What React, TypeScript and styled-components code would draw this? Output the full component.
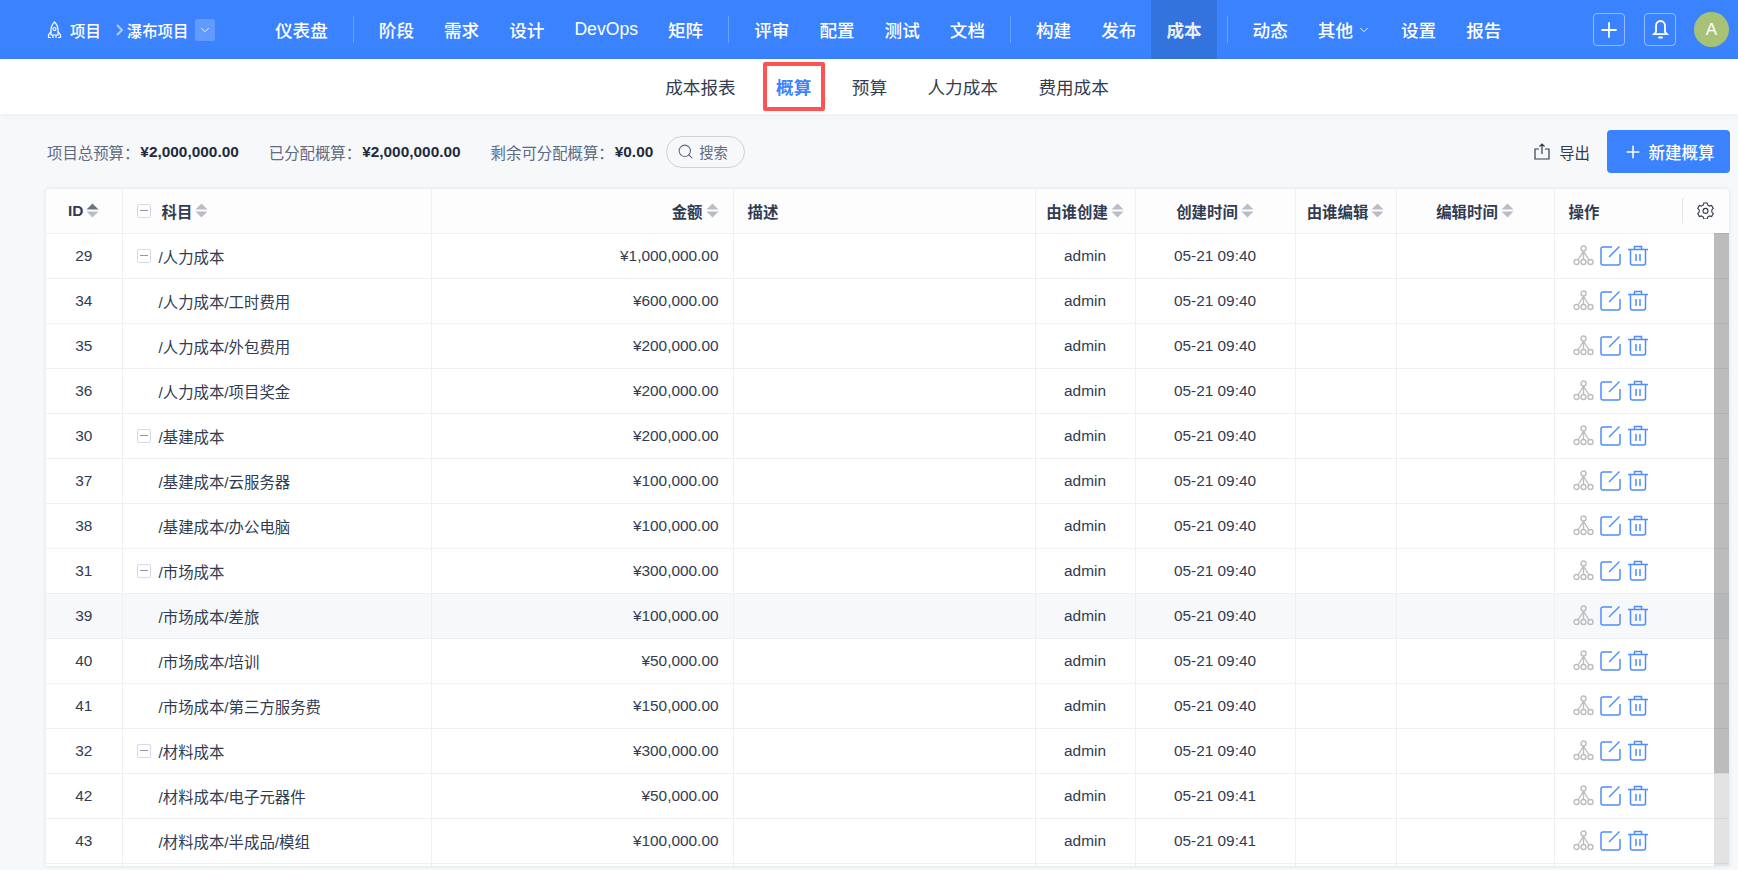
import React from "react";
import styled, { createGlobalStyle } from "styled-components";
import { ChevronDown, Plus, Search } from "lucide-react";

const Global = createGlobalStyle`
  html, body { margin: 0; padding: 0; height: 100%; overflow: hidden; background: #f7f8fa; }
  body { font-family: "Liberation Sans", "Noto Sans CJK SC", sans-serif; color: #313c52; }
  * { box-sizing: border-box; }
`;

const Page = styled.div`
  height: 870px;
  display: flex;
  flex-direction: column;
  overflow: hidden;
`;

const Header = styled.header`
  height: 59px;
  flex: none;
  background: #3b82ff;
  color: #fff;
  display: flex;
  align-items: center;
  padding-left: 47px;
  padding-right: 9px;
`;

const Crumbs = styled.div`
  width: 213px;
  display: flex;
  align-items: center;
  font-size: 15.4px;
  font-weight: 500;
`;

const CrumbText = styled.span`
  margin-left: 8px;
  white-space: nowrap;
`;

const CrumbSep = styled.span`
  display: flex;
  margin-left: 12px;
  margin-right: -8px;
  opacity: 0.6;
`;

const CrumbDrop = styled.span`
  width: 20px;
  height: 22px;
  margin-left: 7px;
  border-radius: 2px;
  background: rgba(255, 255, 255, 0.2);
  display: flex;
  align-items: center;
  justify-content: center;
`;

const Nav = styled.nav`
  display: flex;
  align-items: center;
  height: 59px;
  flex: 1;
`;

const NavItem = styled.a<{ $active?: boolean }>`
  height: 59px;
  padding: 0 15px;
  display: flex;
  align-items: center;
  gap: 4px;
  font-size: 17.6px;
  white-space: nowrap;
  font-weight: ${(p) => (p.$active ? 700 : 500)};
  color: ${(p) => (p.$active ? "#e9edf5" : "#fff")};
  background: ${(p) => (p.$active ? "#3273dd" : "transparent")};
`;

const NavSep = styled.span`
  width: 1px;
  height: 27px;
  margin: 0 10px;
  background: rgba(255, 255, 255, 0.25);
`;

const HeadActions = styled.div`
  display: flex;
  align-items: center;
`;

const IconBox = styled.span`
  width: 32px;
  height: 33px;
  margin-right: 19px;
  border: 1px solid rgba(255, 255, 255, 0.45);
  border-radius: 4px;
  display: flex;
  align-items: center;
  justify-content: center;
`;

const Avatar = styled.span`
  width: 35px;
  height: 35px;
  margin-left: -1px;
  border-radius: 50%;
  background: #a7c276;
  display: flex;
  align-items: center;
  justify-content: center;
  font-size: 17px;
`;

const SubNav = styled.div`
  height: 55px;
  flex: none;
  background: #fff;
  padding-left: 36px;
  display: flex;
  align-items: center;
  justify-content: center;
  gap: 40.5px;
  box-shadow: 0 1px 6px rgba(40, 60, 90, 0.06);
`;

const SubItem = styled.a<{ $active?: boolean }>`
  position: relative;
  font-size: 17.6px;
  white-space: nowrap;
  font-weight: ${(p) => (p.$active ? 700 : 400)};
  color: ${(p) => (p.$active ? "#3b82ff" : "#313c52")};
`;

const Highlight = styled.span`
  position: absolute;
  left: -13px;
  right: -14px;
  top: -12px;
  bottom: -12px;
  border: 4px solid #ff5252;
  border-radius: 2px;
`;

const Toolbar = styled.div`
  height: 75px;
  flex: none;
  padding: 0 8px 0 47px;
  display: flex;
  align-items: center;
  font-size: 15.4px;
`;

const Stat = styled.span`
  display: flex;
  align-items: center;
  margin-right: 30px;
  white-space: nowrap;
  color: #5e6b82;
`;

const StatValue = styled.b`
  margin-left: 1px;
  color: #1f2a3d;
  font-weight: 700;
`;

const SearchPill = styled.span`
  width: 79px;
  height: 32px;
  margin-left: -17px;
  border: 1px solid #ccd2dc;
  border-radius: 16px;
  display: flex;
  align-items: center;
  gap: 5px;
  padding-left: 10px;
  color: #5e6b82;
  font-size: 14.3px;
`;

const Spacer = styled.div`
  flex: 1;
`;

const ExportBtn = styled.span`
  display: flex;
  align-items: center;
  gap: 9px;
  margin-right: 17px;
  color: #313c52;
  font-size: 15.4px;
`;

const PrimaryBtn = styled.span`
  width: 123px;
  height: 43px;
  border-radius: 4px;
  background: #3b82ff;
  color: #fff;
  font-size: 16.5px;
  font-weight: 500;
  display: flex;
  align-items: center;
  justify-content: center;
  gap: 6px;
`;

const TableWrap = styled.div`
  flex: 1;
  min-height: 0;
  position: relative;
  margin: 0 9px 4px 46px;
  background: #fff;
  border-radius: 4px 4px 0 0;
  box-shadow: 0 0 4px rgba(40, 60, 90, 0.12);
  overflow: hidden;
`;

const Table = styled.table`
  width: 100%;
  border-collapse: collapse;
  table-layout: fixed;
  font-size: 15.4px;
`;

const Th = styled.th<{ $align?: string }>`
  height: 44px;
  padding: 0 14px;
  text-align: ${(p) => p.$align || "center"};
  font-weight: 700;
  color: #313c52;
  background: #fdfdfe;
  white-space: nowrap;
  border-right: 1px solid #eff0f3;
  border-bottom: 1px solid #eff0f3;
  &:last-child { border-right: 0; }
`;

const Td = styled.td<{ $align?: string }>`
  height: 45px;
  padding: 0 14px;
  text-align: ${(p) => p.$align || "center"};
  color: #313c52;
  white-space: nowrap;
  border-right: 1px solid #eff0f3;
  border-bottom: 1px solid #eff0f3;
  &:last-child { border-right: 0; }
`;

const Tr = styled.tr<{ $hover?: boolean }>`
  background: ${(p) => (p.$hover ? "#f7f8fa" : "#fff")};
`;

const HeadInner = styled.span<{ $align?: string }>`
  display: flex;
  align-items: center;
  gap: 3px;
  justify-content: ${(p) => p.$align || "center"};
`;

const TreeBox = styled.span`
  display: inline-flex;
  width: 14px;
  height: 14px;
  border: 1px solid #d6dae2;
  border-radius: 2px;
  align-items: center;
  justify-content: center;
  margin-right: 8px;
  flex: none;
  &::before {
    content: "";
    width: 8px;
    height: 1px;
    background: #8e97a8;
  }
`;

const SubjectCell = styled.span<{ $child?: boolean }>`
  display: flex;
  align-items: center;
  padding-left: ${(p) => (p.$child ? "18px" : "0")};
  margin-left: ${(p) => (p.$child ? "4px" : "0")};
`;

const Actions = styled.span`
  display: flex;
  align-items: center;
  gap: 6px;
  padding-left: 4px;
`;

const OpHead = styled.span`
  display: flex;
  align-items: center;
  justify-content: space-between;
`;

const OpTools = styled.span`
  display: flex;
  align-items: center;
  height: 25px;
  border-left: 1px solid #e4e6ea;
  padding-left: 14px;
  margin-right: 1px;
`;

const Track = styled.div`
  position: absolute;
  top: 44px;
  right: 0;
  bottom: 0;
  width: 15px;
  background: rgba(0, 0, 0, 0.11);
`;

const Thumb = styled.div`
  width: 100%;
  height: 540px;
  background: rgba(0, 0, 0, 0.17);
`;

const Footer = styled.div`
  height: 0;
`;

const Sort = ({ dark }: { dark?: boolean }) => (
  <svg width="13" height="15" viewBox="0 0 13 15" style={{ flex: "none" }}>
    <path d="M6.5 0.5L12.5 6.5H0.5Z" fill={dark ? "#6b7280" : "#b9bdc6"} />
    <path d="M6.5 14.5L12.5 8.5H0.5Z" fill="#b9bdc6" />
  </svg>
);

const Rocket = () => (
  <svg width="15" height="18" viewBox="0 0 15 18" fill="none" stroke="#fff" strokeWidth="1.2">
    <path d="M7.5 1C5 3.5 4 6 4 9v5h7V9c0-3-1-5.500-3.500-8z" />
    <circle cx="7.500" cy="8" r="1.500" />
    <path d="M4 10.500L1.500 14v2.500H4M11 10.500L13.500 14v2.500H11M6 14v3M9 14v3" />
  </svg>
);

const Bell = () => (
  <svg width="19" height="21" viewBox="0 0 19 21" fill="none" stroke="#fff" strokeWidth="1.8">
    <path d="M9.500 2C6.500 2 5 4.500 5 7v6l-2 2.200h13L14 13V7c0-2.500-1.500-5-4.500-5z" />
    <path d="M8 18.500h3" strokeLinecap="round" />
  </svg>
);

const Org = () => (
  <svg width="21" height="21" viewBox="0 0 21 21" fill="none" stroke="#bdbdbd" strokeWidth="1.400">
    <circle cx="10.500" cy="3.500" r="2.500" />
    <circle cx="3.500" cy="17" r="2.500" />
    <circle cx="10.500" cy="17" r="2.500" />
    <circle cx="17.500" cy="17" r="2.500" />
    <path d="M10.500 6v8.500M10 7L5 15M11 7l5 8" />
  </svg>
);

const Edit = () => (
  <svg width="21" height="21" viewBox="0 0 21 21" fill="none" stroke="#4d8dff" strokeWidth="1.500">
    <path d="M12 2H3a2 2 0 0 0-2 2v14a2 2 0 0 0 2 2h15a2 2 0 0 0 2-2V9" />
    <path d="M19.500 1.500L9 12" stroke="#4d8dff" />
  </svg>
);

const Trash = () => (
  <svg width="22" height="21" viewBox="0 0 22 21" fill="none" stroke="#4d8dff" strokeWidth="1.500">
    <path d="M1 4.500h20M7.500 4.500V1.500h7v3M3.500 4.500V18a2 2 0 0 0 2 2h11a2 2 0 0 0 2-2V4.500M9 9v7M13 9v7" />
  </svg>
);

const Gear = () => (
  <svg width="17" height="17" viewBox="0 0 17 17" fill="none" stroke="#313c52" strokeWidth="1.100">
    <path d="M6.800 1h3.400l.5 2 1.900 1.100 2-.6 1.700 3-1.500 1.400v2.200l1.500 1.400-1.700 3-2-.6-1.900 1.100-.5 2H6.800l-.5-2-1.900-1.100-2 .6-1.700-3 1.500-1.400V7.900L.7 6.500l1.700-3 2 .6L6.300 3z" />
    <circle cx="8.500" cy="8.900" r="2.500" />
  </svg>
);

const ExportIcon = () => (
  <svg width="16" height="17" viewBox="0 0 16 17" fill="none" stroke="#313c52" strokeWidth="1.200">
    <path d="M5 6H1v10h14V6h-4M8 11V1M5.500 3.500L8 1l2.500 2.500" />
  </svg>
);

type Row = { id: number; name: string; amount: string; time?: string; parent?: boolean; hover?: boolean };

const rows: Row[] = [
  { id: 29, name: "/人力成本", amount: "¥1,000,000.00", parent: true },
  { id: 34, name: "/人力成本/工时费用", amount: "¥600,000.00" },
  { id: 35, name: "/人力成本/外包费用", amount: "¥200,000.00" },
  { id: 36, name: "/人力成本/项目奖金", amount: "¥200,000.00" },
  { id: 30, name: "/基建成本", amount: "¥200,000.00", parent: true },
  { id: 37, name: "/基建成本/云服务器", amount: "¥100,000.00" },
  { id: 38, name: "/基建成本/办公电脑", amount: "¥100,000.00" },
  { id: 31, name: "/市场成本", amount: "¥300,000.00", parent: true },
  { id: 39, name: "/市场成本/差旅", amount: "¥100,000.00", hover: true },
  { id: 40, name: "/市场成本/培训", amount: "¥50,000.00" },
  { id: 41, name: "/市场成本/第三方服务费", amount: "¥150,000.00" },
  { id: 32, name: "/材料成本", amount: "¥300,000.00", parent: true },
  { id: 42, name: "/材料成本/电子元器件", amount: "¥50,000.00", time: "05-21 09:41" },
  { id: 43, name: "/材料成本/半成品/模组", amount: "¥100,000.00", time: "05-21 09:41" },
  { id: 44, name: "", amount: "" },
];

const navGroups = [
  ["仪表盘"],
  ["阶段", "需求", "设计", "DevOps", "矩阵"],
  ["评审", "配置", "测试", "文档"],
  ["构建", "发布", "成本"],
];

const widths = [76, 309, 302, 302, 100, 160, 101, 158, 175];

export default function App() {
  return (
    <Page>
      <Global />
      <Header>
        <Crumbs>
          <Rocket />
          <CrumbText>项目</CrumbText>
          <CrumbSep>
            <svg width="14" height="14" viewBox="0 0 14 14" fill="none" stroke="#fff" strokeWidth="2">
              <path d="M4 2l5 5-5 5" />
            </svg>
          </CrumbSep>
          <CrumbText>瀑布项目</CrumbText>
          <CrumbDrop>
            <ChevronDown size={14} strokeWidth={1.5} />
          </CrumbDrop>
        </Crumbs>
        <Nav>
          {navGroups.map((g, i) => (
            <React.Fragment key={i}>
              {g.map((n) => (
                <NavItem key={n} $active={n === "成本"}>{n}</NavItem>
              ))}
              <NavSep />
            </React.Fragment>
          ))}
          <NavItem>动态</NavItem>
          <NavItem>其他<ChevronDown size={14} strokeWidth={1.5} /></NavItem>
          <NavItem>设置</NavItem>
          <NavItem>报告</NavItem>
        </Nav>
        <HeadActions>
          <IconBox><Plus size={24} strokeWidth={1.800} /></IconBox>
          <IconBox><Bell /></IconBox>
          <Avatar>A</Avatar>
        </HeadActions>
      </Header>
      <SubNav>
        <SubItem>成本报表</SubItem>
        <SubItem $active>概算<Highlight /></SubItem>
        <SubItem>预算</SubItem>
        <SubItem>人力成本</SubItem>
        <SubItem>费用成本</SubItem>
      </SubNav>
      <Toolbar>
        <Stat>项目总预算：<StatValue>¥2,000,000.00</StatValue></Stat>
        <Stat>已分配概算：<StatValue>¥2,000,000.00</StatValue></Stat>
        <Stat>剩余可分配概算：<StatValue>¥0.00</StatValue></Stat>
        <SearchPill><Search size={17} strokeWidth={1.500} />搜索</SearchPill>
        <Spacer />
        <ExportBtn><ExportIcon />导出</ExportBtn>
        <PrimaryBtn><Plus size={20} strokeWidth={1.800} />新建概算</PrimaryBtn>
      </Toolbar>
      <TableWrap>
        <Table>
          <colgroup>
            {widths.map((w, i) => <col key={i} style={{ width: w }} />)}
          </colgroup>
          <thead>
            <tr>
              <Th><HeadInner>ID<Sort dark /></HeadInner></Th>
              <Th $align="left"><HeadInner $align="flex-start"><TreeBox />科目<Sort /></HeadInner></Th>
              <Th $align="right"><HeadInner $align="flex-end">金额<Sort /></HeadInner></Th>
              <Th $align="left">描述</Th>
              <Th><HeadInner>由谁创建<Sort /></HeadInner></Th>
              <Th><HeadInner>创建时间<Sort /></HeadInner></Th>
              <Th><HeadInner>由谁编辑<Sort /></HeadInner></Th>
              <Th><HeadInner>编辑时间<Sort /></HeadInner></Th>
              <Th $align="left"><OpHead>操作<OpTools><Gear /></OpTools></OpHead></Th>
            </tr>
          </thead>
          <tbody>
            {rows.map((r) => (
              <Tr key={r.id} $hover={r.hover}>
                <Td>{r.name ? r.id : ""}</Td>
                <Td $align="left">
                  {r.name && (
                    <SubjectCell $child={!r.parent}>
                      {r.parent && <TreeBox />}
                      {r.name}
                    </SubjectCell>
                  )}
                </Td>
                <Td $align="right">{r.amount}</Td>
                <Td />
                <Td>{r.name ? "admin" : ""}</Td>
                <Td>{r.name ? r.time || "05-21 09:40" : ""}</Td>
                <Td />
                <Td />
                <Td $align="left">
                  {r.name && <Actions><Org /><Edit /><Trash /></Actions>}
                </Td>
              </Tr>
            ))}
          </tbody>
        </Table>
        <Track><Thumb /></Track>
      </TableWrap>
      <Footer />
    </Page>
  );
}
